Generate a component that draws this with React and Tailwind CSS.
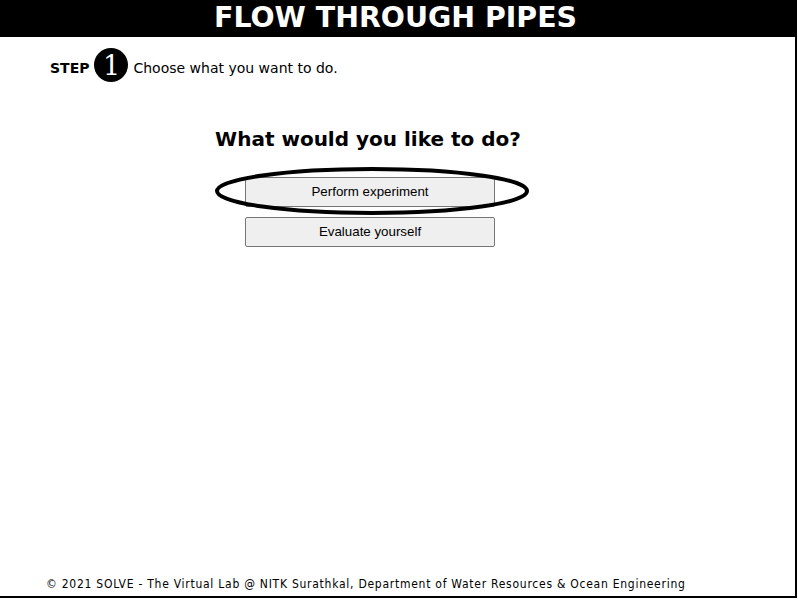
import React from "react";

export default function App() {
  return (
    <div className="w-[797px] h-[598px] border-r-2 border-b-2 border-black bg-white flex flex-col font-['DejaVu_Sans',sans-serif] text-black">
      {/* Title bar */}
      <div className="h-[37px] bg-black flex items-center justify-center">
        <h1 className="text-white font-bold text-[28.4px] leading-none pr-[4px]">
          FLOW THROUGH PIPES
        </h1>
      </div>

      {/* Step line */}
      <div className="flex items-center pl-[50px] mt-[11px] h-[34px]">
        <span className="font-bold text-[14px] mt-[7px]">STEP</span>
        <span className="ml-[5px] w-[34px] h-[34px] rounded-full bg-black text-white flex items-center justify-center text-[27px] leading-none font-['DejaVu_Serif',serif]">
          1
        </span>
        <span className="ml-[5px] text-[14px] mt-[7px]">Choose what you want to do.</span>
      </div>

      {/* Choices */}
      <div className="w-[736px] flex flex-col items-center mt-[47px]">
        <h2 className="font-bold text-[20px] leading-none">What would you like to do?</h2>
        <div className="relative mt-[28px] flex flex-col gap-[10px] ml-[4px]">
          <button className="w-[250px] h-[30px] bg-[#efefef] border border-[#767676] rounded-[2px] text-[13.33px] font-['Liberation_Sans',sans-serif]">
            Perform experiment
          </button>
          <button className="w-[250px] h-[30px] bg-[#efefef] border border-[#767676] rounded-[2px] text-[13.33px] font-['Liberation_Sans',sans-serif]">
            Evaluate yourself
          </button>
          <svg
            className="absolute left-[-32px] top-[-11px] pointer-events-none"
            width="318"
            height="50"
            viewBox="0 0 318 50"
          >
            <ellipse cx="159" cy="25" rx="155" ry="22" fill="none" stroke="black" strokeWidth="4" />
          </svg>
        </div>
      </div>

      {/* Footer */}
      <div className="mt-auto pl-[46px] pb-[3px] text-[12px] tracking-[0.74px] font-['DejaVu_Sans_Condensed',sans-serif]">
        © 2021 SOLVE - The Virtual Lab @ NITK Surathkal, Department of Water Resources &amp; Ocean Engineering
      </div>
    </div>
  );
}
